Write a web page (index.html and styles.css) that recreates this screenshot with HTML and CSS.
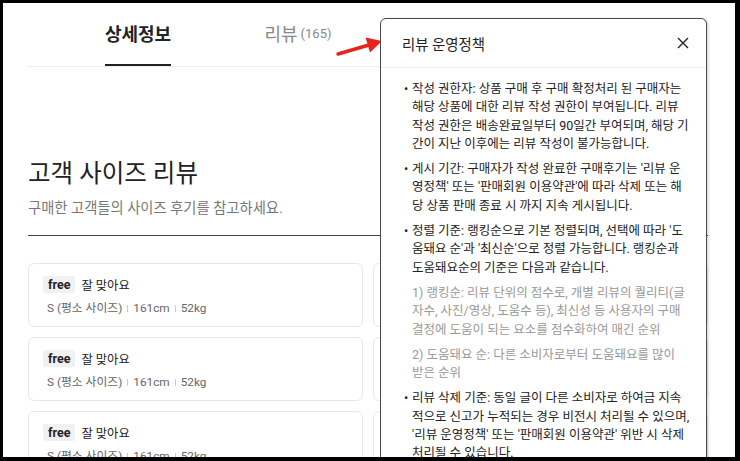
FILE: index.html
```html
<!doctype html>
<html lang="ko">

<head>
    <meta charset="utf-8">
    <meta name="viewport" content="width=device-width, initial-scale=1">
    <title>리뷰</title>
    <link rel="stylesheet" href="styles.css">
</head>

<body>
    <div class="page">
        <nav class="tabs">
            <a class="tab active"><span>상세정보</span></a>
            <a class="tab"><span>리뷰 <small>(165)</small></span></a>
        </nav>

        <section class="intro">
            <h2>고객 사이즈 리뷰</h2>
            <p>구매한 고객들의 사이즈 후기를 참고하세요.</p>
        </section>

        <div class="cards">
            <div class="card">
                <div class="card-top"><span class="badge">free</span><span class="fit">잘 맞아요</span></div>
                <div class="meta">S (평소 사이즈)<i></i>161cm<i></i>52kg</div>
            </div>
            <div class="card">
                <div class="card-top"><span class="badge">free</span><span class="fit">잘 맞아요</span></div>
                <div class="meta">S (평소 사이즈)<i></i>158cm<i></i>48kg</div>
            </div>
            <div class="card">
                <div class="card-top"><span class="badge">free</span><span class="fit">잘 맞아요</span></div>
                <div class="meta">S (평소 사이즈)<i></i>161cm<i></i>52kg</div>
            </div>
            <div class="card">
                <div class="card-top"><span class="badge">free</span><span class="fit">잘 맞아요</span></div>
                <div class="meta">S (평소 사이즈)<i></i>161cm<i></i>52kg</div>
            </div>
            <div class="card">
                <div class="card-top"><span class="badge">free</span><span class="fit">잘 맞아요</span></div>
                <div class="meta">S (평소 사이즈)<i></i>161cm<i></i>52kg</div>
            </div>
            <div class="card">
                <div class="card-top"><span class="badge">free</span><span class="fit">잘 맞아요</span></div>
                <div class="meta">S (평소 사이즈)<i></i>161cm<i></i>52kg</div>
            </div>
        </div>

        <!-- red pointer next to the popup title -->
        <svg class="pointer" width="50" height="24" viewBox="0 0 50 24">
            <line x1="3" y1="19" x2="34" y2="10" stroke="#e8231c" stroke-width="3.4" stroke-linecap="round"/>
            <polygon points="47,6 30.6,2.6 35,17.4" fill="#e8231c"/>
        </svg>

        <div class="policy">
            <div class="policy-head">
                <h3>리뷰 운영정책</h3>
                <svg class="close" width="12" height="12" viewBox="0 0 12 12">
                    <path d="M1 1 L11 11 M11 1 L1 11" stroke="#222" stroke-width="1.4" fill="none"/>
                </svg>
            </div>
            <ul class="policy-body">
                <li><div>작성 권한자: 상품 구매 후 구매 확정처리 된 구매자는<br>해당 상품에 대한 리뷰 작성 권한이 부여됩니다. 리뷰<br>작성 권한은 배송완료일부터 90일간 부여되며, 해당 기<br>간이 지난 이후에는 리뷰 작성이 불가능합니다.</div></li>
                <li><div>게시 기간: 구매자가 작성 완료한 구매후기는 '리뷰 운<br>영정책' 또는 '판매회원 이용약관'에 따라 삭제 또는 해<br>당 상품 판매 종료 시 까지 지속 게시됩니다.</div></li>
                <li>
                    <div>
                        정렬 기준: 랭킹순으로 기본 정렬되며, 선택에 따라 '도<br>움돼요 순'과 '최신순'으로 정렬 가능합니다. 랭킹순과<br>도움돼요순의 기준은 다음과 같습니다.
                        <p class="sub">1) 랭킹순: 리뷰 단위의 점수로, 개별 리뷰의 퀄리티(글<br>자수, 사진/영상, 도움수 등), 최신성 등 사용자의 구매<br>결정에 도움이 되는 요소를 점수화하여 매긴 순위</p>
                        <p class="sub">2) 도움돼요 순: 다른 소비자로부터 도움돼요를 많이<br>받은 순위</p>
                    </div>
                </li>
                <li><div>리뷰 삭제 기준: 동일 글이 다른 소비자로 하여금 지속<br>적으로 신고가 누적되는 경우 비전시 처리될 수 있으며,<br>'리뷰 운영정책' 또는 '판매회원 이용약관' 위반 시 삭제<br>처리될 수 있습니다.</div></li>
            </ul>
        </div>
    </div>
</body>

</html>
```

FILE: styles.css
```css
body {
    margin: 0;
    width: 740px;
    height: 461px;
    background-color: #000;
    font-family: Roboto, "Noto Sans CJK KR", sans-serif;
    color: #222;
    overflow: hidden;
}
.page {
    position: relative;
    margin: 3px 0 0 3px;
    width: 732px;
    height: 454px;
    padding-left: 25px;
    box-sizing: border-box;
    background-color: #fff;
    overflow: hidden;
}
.tabs {
    display: flex;
    width: 680px;
    height: 64px;
    padding-left: 30px;
    box-sizing: border-box;
    border-bottom: 1px solid #eee;
}
.tab {
    width: 160px;
    display: flex;
    justify-content: center;
    color: #888;
    font-size: 18px;
}
.tab span {
    display: flex;
    align-items: center;
    padding-bottom: 2px;
    border-bottom: 2px solid transparent;
}
.tab small {
    font-size: 13px;
    margin-left: 3px;
    margin-top: 2px;
}
.tab.active {
    color: #222;
    font-weight: 700;
}
.tab.active span {
    border-bottom-color: #222;
}
.intro {
    width: 680px;
    margin-top: 92px;
    padding-bottom: 16px;
    border-bottom: 1px solid #444;
}
.intro h2 {
    margin: 0;
    font-size: 24.5px;
    font-weight: 400;
    line-height: 30px;
}
.intro p {
    margin: 9px 0 0;
    font-size: 14.3px;
    line-height: 21px;
    color: #777;
}
.cards {
    display: grid;
    grid-template-columns: 1fr 1fr;
    gap: 10px;
    width: 680px;
    margin-top: 27px;
}
.card {
    height: 64px;
    box-sizing: border-box;
    padding: 12px 14px 0;
    border: 1px solid #e8e8e8;
    border-radius: 6px;
}
.card-top {
    display: flex;
    align-items: center;
    height: 17px;
}
.badge {
    height: 17px;
    line-height: 17px;
    padding: 0 5px;
    background-color: #f1f1f1;
    border-radius: 2px;
    font-size: 12.5px;
    font-weight: 700;
}
.fit {
    margin-left: 6px;
    font-size: 12.3px;
}
.meta {
    display: flex;
    align-items: center;
    margin: 6px 0 0 4px;
    line-height: 18px;
    font-size: 11.8px;
    color: #666;
}
.meta i {
    width: 1px;
    height: 7px;
    margin: 1px 5px 0 5px;
    background-color: #ccc;
}
.pointer {
    position: absolute;
    left: 332px;
    top: 32px;
}
.policy {
    position: absolute;
    left: 377px;
    top: 15px;
    width: 327px;
    height: 480px;
    box-sizing: border-box;
    background-color: #fff;
    border: 1px solid #4a4a4a;
    border-radius: 6px;
    box-shadow: 2px 0 2px rgba(0, 0, 0, 0.12);
}
.policy-head {
    display: flex;
    align-items: center;
    justify-content: space-between;
    height: 48px;
    padding: 0 17px 0 21px;
    border-bottom: 1px solid #f0f0f0;
}
.policy-head h3 {
    margin: 0;
    font-size: 14.4px;
    font-weight: 400;
}
.policy-body {
    list-style: none;
    margin: 0;
    padding: 12px 5px 0 21px;
    font-size: 12.5px;
    line-height: 18.3px;
    color: #222;
}
.policy-body li {
    display: flex;
    margin-bottom: 7px;
}
.policy-body li::before {
    content: "•";
    flex: none;
    width: 8px;
    padding-left: 2px;
}
.policy-body .sub {
    margin: 7px 0 0;
    color: #999;
}
```
